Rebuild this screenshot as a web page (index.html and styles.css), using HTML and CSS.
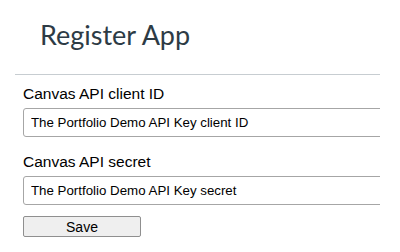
FILE: index.html
```html
<!DOCTYPE html>
<html lang="en">
<head>
    <meta charset="UTF-8">
    <title>Register App</title>
    <link rel="stylesheet" href="styles.css">
</head>
<body>
    <div class="page">
        <h1 class="page-title">Register App</h1>
        <form class="register-form">
            <label class="field-label" for="client-id">Canvas API client ID</label>
            <input class="field-input" id="client-id" type="text" value="The Portfolio Demo API Key client ID">
            <label class="field-label" for="client-secret">Canvas API secret</label>
            <input class="field-input" id="client-secret" type="text" value="The Portfolio Demo API Key secret">
            <button class="save-button" type="button">Save</button>
        </form>
    </div>
</body>
</html>
```

FILE: styles.css
```css
/* Register app page */
body {
    margin: 0;
    background-color: #fff;
    font-family: "Liberation Sans", Arial, sans-serif;
}

.page {
    width: 365px;
    margin-left: 15px;
    overflow: hidden;
}

.page-title {
    margin: 0;
    padding: 19px 0 23px 25px;
    font-family: Lato, sans-serif;
    font-weight: 400;
    font-size: 27px;
    line-height: 32px;
    color: #2d3b45;
    border-bottom: 1px solid #c7cdd1;
}

.register-form {
    display: flex;
    flex-direction: column;
    align-items: flex-start;
    padding: 9px 0 0 8px;
}

.field-label {
    font-size: 15.5px;
    line-height: 20px;
    color: #000;
    margin-bottom: 4px;
}

.field-input + .field-label {
    margin-top: 15px;
}

.field-input {
    box-sizing: border-box;
    width: 380px;
    height: 29px;
    margin: 0;
    padding: 0 7px;
    font-family: "Liberation Sans", Arial, sans-serif;
    font-size: 13.3px;
    color: #000;
    border: 1px solid #a6a6a6;
    border-radius: 3px;
}

.save-button {
    width: 118px;
    height: 21px;
    margin-top: 11px;
    padding: 0;
    font-family: "Liberation Sans", Arial, sans-serif;
    font-size: 14px;
    color: #000;
    background-color: #efefef;
    border: 1px solid #8f8f8f;
    border-radius: 2px;
}
```
